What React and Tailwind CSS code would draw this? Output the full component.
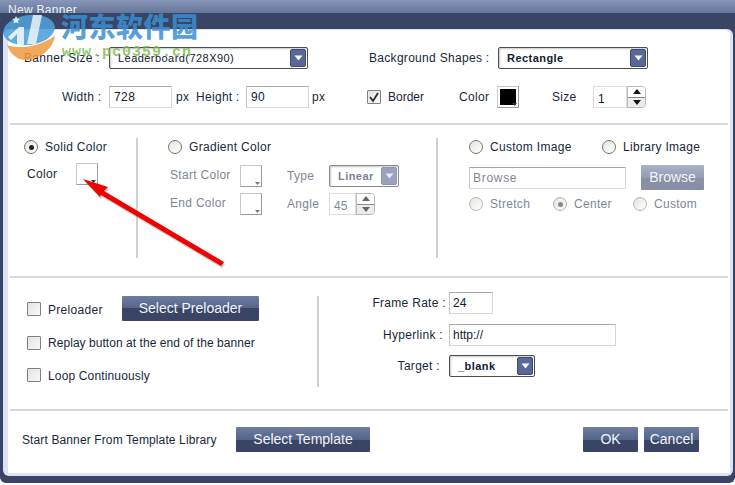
const FONT = { fontFamily: '"Liberation Sans", Arial, sans-serif' };

function Arrow({ muted }) {
  return (
    <svg width="9" height="6" viewBox="0 0 9 6">
      <path d="M0.5 0.5h8L4.5 5.5z" fill={muted ? '#e8ebf2' : '#ffffff'} />
    </svg>
  );
}

function Select({ label, className, bold, muted }) {
  return (
    <div className={`flex h-[22px] items-center justify-between rounded-[2px] border pl-[8px] pr-[1px] shadow-[inset_1px_1px_2px_#c8c8c8] ${muted ? 'border-[#8a8a8a]' : 'border-[#4d4d4d]'} ${className}`}>
      <span className={`text-[11px] ${bold ? 'font-bold' : ''} ${muted ? 'text-[#7a8294]' : 'text-[#10202e]'} tracking-[0.45px]`}>{label}</span>
      <div className={`flex h-[18px] w-[16px] items-center justify-center rounded-[2px] border ${muted ? 'border-[#8f97b4] bg-[#9aa2bf]' : 'border-[#3f4a70] bg-[#5a6897]'}`}>
        <Arrow muted={muted} />
      </div>
    </div>
  );
}

function Field({ value, className, muted }) {
  return (
    <div className={`flex h-[22px] items-center border border-[#d8d8d8] border-t-[#a8a8a8] border-l-[#c4c4c4] pl-[3px] text-[12px] ${muted ? 'text-[#7f8794] tracking-[0.7px]' : 'text-[#10202e]'} ${className}`}>
      {value}
    </div>
  );
}

function Radio({ checked, muted }) {
  return (
    <span className={`flex h-[14px] w-[14px] shrink-0 items-center justify-center rounded-full border bg-gradient-to-br from-[#e4e4e0] to-white ${muted ? 'border-[#b0b8a8]' : 'border-[#6f7c62]'}`}>
      {checked && <span className={`h-[5px] w-[5px] rounded-full ${muted ? 'bg-[#8a8a8a]' : 'bg-[#222222]'}`} />}
    </span>
  );
}

function Check({ checked }) {
  return (
    <span className="flex h-[14px] w-[14px] shrink-0 items-center justify-center rounded-[1px] border border-[#808080] bg-gradient-to-br from-[#e2e2e2] to-[#fafafa]">
      {checked && (
        <svg width="12" height="12" viewBox="0 0 12 12">
          <path d="M2 6l3 4 5-8" fill="none" stroke="#2b2b2b" strokeWidth="1.8" />
        </svg>
      )}
    </span>
  );
}

function Swatch({ fill, muted, className }) {
  return (
    <div className={`relative h-[22px] w-[22px] border border-t-[#c8c8c8] border-l-[#c8c8c8] border-r-[#9a9a9a] border-b-[#9a9a9a] bg-white p-[2px] ${className}`}>
      <div className={`h-full w-full ${fill ? 'bg-black' : ''}`} />
      <svg className="absolute bottom-[1px] right-[1px]" width="5" height="3" viewBox="0 0 5 3">
        <path d="M0 0h5L2.5 3z" fill={muted ? '#777777' : '#333333'} />
      </svg>
    </div>
  );
}

function Spinner({ value, muted, className, h }) {
  return (
    <div className={`flex ${h} ${className}`}>
      <div className={`flex w-[34px] items-center border border-[#dcdcdc] pl-[4px] text-[12px] ${muted ? 'text-[#7f8794]' : 'text-[#10202e]'}`}>
        <span className="mt-[3px]">{value}</span>
      </div>
      <div className="flex w-[19px] flex-col overflow-hidden rounded-r-[4px] border border-[#b8b8b8]">
        <div className="flex flex-1 items-center justify-center border-b border-[#8a8a8a] bg-white">
          <svg width="8" height="5" viewBox="0 0 8 5"><path d="M4 0l4 5H0z" fill={muted ? '#666666' : '#111111'} /></svg>
        </div>
        <div className="flex flex-1 items-center justify-center bg-[#ececec]">
          <svg width="8" height="5" viewBox="0 0 8 5"><path d="M0 0h8L4 5z" fill={muted ? '#666666' : '#111111'} /></svg>
        </div>
      </div>
    </div>
  );
}

function Btn({ label, className, muted }) {
  return (
    <div className={`flex h-[25px] items-center justify-center overflow-hidden rounded-[1px] text-[14px] ${muted ? 'bg-[linear-gradient(#aab2c8,#959cb5_50%,#898fa7_50%)] text-[#f4f5f8]' : 'bg-[linear-gradient(#6d7ca0,#55648a_50%,#3a4566_50%)] text-[#f2f4f8]'} ${className}`}>
      {label}
    </div>
  );
}

function Label({ children, className }) {
  return <span className={`text-[12px] tracking-[0.3px] text-[#18283a] ${className}`}>{children}</span>;
}

function Muted({ children, className }) {
  return <span className={`text-[12px] tracking-[0.3px] text-[#7f8794] ${className}`}>{children}</span>;
}

function Line() {
  return <div className="mx-[2px] h-[2px] bg-[#d8d8d8]" />;
}

export default function App() {
  return (
    <div className="relative h-[485px] w-[735px] overflow-hidden bg-white" style={FONT}>
      <div className="flex h-[483px] flex-col rounded-b-[6px] bg-[#3a4566] pb-[7px]">
        <div className="h-[13px] bg-[linear-gradient(#8896b8,#66759b)] pl-[8px] text-[12px] leading-[20px] tracking-[0.3px] text-[#eef1f7]">New Banner</div>
        <div className="h-[16px] bg-[#3a4566]" />
        <div className="ml-[3px] mr-[2px] flex flex-1 flex-col rounded-[6px] bg-[#dfe2f2] pl-[5px] pr-[3px] pt-[1px] pb-[3px]">
          <div className="flex flex-1 flex-col rounded-t-[5px] bg-white">
            {/* top rows */}
            <div className="flex h-[93px] flex-col">
              <div className="mt-[17px] flex h-[22px] items-center">
                <Label className="ml-[16px] w-[85px]">Banner Size  :</Label>
                <Select label="Leaderboard(728X90)" className="w-[199px]" />
                <Label className="ml-[61px] w-[129px]">Background Shapes  :</Label>
                <Select label="Rectangle" bold className="w-[150px]" />
              </div>
              <div className="mt-[17px] flex h-[22px] items-center">
                <Label className="ml-[54px] w-[47px]">Width :</Label>
                <Field value="728" className="w-[63px] pl-[4px] tracking-[0.4px]" />
                <Label className="ml-[4px] w-[20px]">px</Label>
                <Label className="w-[50px]">Height :</Label>
                <Field value="90" className="w-[63px] pl-[4px] tracking-[0.4px]" />
                <Label className="ml-[3px] w-[55px]">px</Label>
                <Check checked />
                <Label className="ml-[7px] w-[71px] tracking-[0px]">Border</Label>
                <Label className="w-[38px]">Color</Label>
                <Swatch fill />
                <Label className="ml-[33px] w-[41px]">Size</Label>
                <Spinner value="1" h="h-[22px]" />
              </div>
            </div>
            <Line />
            {/* fill section */}
            <div className="flex h-[151px] pt-[13px]">
              <div className="flex h-[120px] w-[130px] flex-col border-r-2 border-[#d0d0d0] pl-[16px]">
                <div className="flex items-center gap-[7px]">
                  <Radio checked />
                  <Label>Solid Color</Label>
                </div>
                <div className="mt-[7px] flex items-center">
                  <Label className="ml-[3px] w-[49px]">Color</Label>
                  <Swatch />
                </div>
              </div>
              <div className="flex h-[120px] w-[300px] flex-col border-r-2 border-[#d0d0d0] pl-[30px]">
                <div className="flex items-center gap-[7px]">
                  <Radio />
                  <Label>Gradient Color</Label>
                </div>
                <div className="mt-[9px] flex items-center">
                  <Muted className="mb-[2px] ml-[2px] w-[70px]">Start Color</Muted>
                  <Swatch muted />
                  <Muted className="ml-[25px] w-[42px]">Type</Muted>
                  <Select label="Linear" bold muted className="w-[70px]" />
                </div>
                <div className="mt-[6px] flex items-center">
                  <Muted className="mb-[2px] ml-[2px] w-[70px]">End Color</Muted>
                  <Swatch muted />
                  <Muted className="ml-[25px] w-[42px]">Angle</Muted>
                  <Spinner value="45" muted h="h-[22px]" className="w-[46px] [&>div:first-child]:w-[28px]" />
                </div>
              </div>
              <div className="flex flex-col pl-[31px]">
                <div className="flex items-center">
                  <Radio />
                  <Label className="ml-[7px] w-[112px]">Custom Image</Label>
                  <Radio />
                  <Label className="ml-[7px]">Library Image</Label>
                </div>
                <div className="mt-[9px] flex items-center">
                  <Field value="Browse" muted className="w-[157px]" />
                  <Btn label="Browse" muted className="ml-[15px] w-[63px]" />
                </div>
                <div className="mt-[5px] flex items-center">
                  <Radio muted />
                  <Muted className="ml-[7px] w-[63px]">Stretch</Muted>
                  <Radio checked muted />
                  <Muted className="ml-[7px] w-[59px]">Center</Muted>
                  <Radio muted />
                  <Muted className="ml-[7px]">Custom</Muted>
                </div>
              </div>
            </div>
            <Line />
            {/* options */}
            <div className="flex h-[131px] pt-[18px]">
              <div className="flex h-[91px] w-[311px] flex-col border-r-2 border-[#d0d0d0] pl-[19px]">
                <div className="flex h-[25px] items-center">
                  <Check />
                  <Label className="mt-[2px] ml-[7px] w-[74px]">Preloader</Label>
                  <Btn label="Select Preloader" className="w-[137px]" />
                </div>
                <div className="mt-[10px] flex h-[24px] items-center">
                  <Check />
                  <Label className="ml-[7px] tracking-[0.05px]">Replay button at the end of the banner</Label>
                </div>
                <div className="mt-[9px] flex h-[24px] items-center">
                  <Check />
                  <Label className="mt-[2px] ml-[7px] tracking-[0.15px]">Loop Continuously</Label>
                </div>
              </div>
              <div className="flex flex-col">
                <div className="mt-[-4px] flex h-[22px] items-center">
                  <Label className="w-[127px] text-right">Frame Rate :</Label>
                  <Field value="24" className="ml-[3px] w-[44px]" />
                </div>
                <div className="mt-[10px] flex h-[22px] items-center">
                  <Label className="w-[124px] text-right">Hyperlink :</Label>
                  <Field value="http://" className="ml-[6px] w-[167px]" />
                </div>
                <div className="mt-[9px] flex h-[22px] items-center">
                  <Label className="w-[121px] text-right">Target :</Label>
                  <Select label="_blank" bold className="ml-[9px] w-[86px]" />
                </div>
              </div>
            </div>
            <Line />
            {/* footer */}
            <div className="mt-[16px] flex h-[25px] items-center">
              <Label className="ml-[14px] w-[214px] text-[11.5px] tracking-[0.12px]">Start Banner From Template Library</Label>
              <Btn label="Select Template" className="w-[134px]" />
              <Btn label="OK" className="ml-[213px] w-[55px]" />
              <Btn label="Cancel" className="ml-[6px] w-[55px]" />
            </div>
          </div>
        </div>
      </div>

      {/* pc0359 watermark over the dialog */}
      <svg className="absolute left-0 top-[12px]" width="60" height="50" viewBox="0 0 60 50">
        <ellipse cx="29" cy="18" rx="26" ry="15" transform="rotate(-8 29 18)" fill="#4f9fd8" opacity="0.88" />
        <path d="M33 3h9L36 32h-9z" fill="#ffffff" opacity="0.75" />
        <path d="M8 25l11-10h5v18h-7V22l-6 6z" fill="#ffffff" opacity="0.8" />
        <path d="M16 4l1.2 2.6 2.8.3-2.1 1.9.6 2.8-2.5-1.4-2.5 1.4.6-2.8-2.1-1.9 2.8-.3z" fill="#ffffff" opacity="0.8" />
        <path d="M7 33c10 4 30 3 48-9-2 12-13 22-27 24-10 1-18-6-21-15z" fill="#f09a3e" opacity="0.85" />
      </svg>
      <div className="absolute left-[61px] top-[9px] text-[27px] leading-[34px] font-black tracking-[0.5px] text-[#3a8fd0]/85" style={{ fontFamily: '"Noto Sans CJK SC", sans-serif' }}>河东软件园</div>
      <div className="absolute left-[62px] top-[44px] text-[15px] leading-[18px] font-bold tracking-[1px] text-[#79b84a]/80" style={{ fontFamily: '"Liberation Mono", monospace' }}>www.pc0359.cn</div>

      {/* red annotation arrow */}
      <svg className="absolute left-0 top-0" width="735" height="485" viewBox="0 0 735 485" style={{ pointerEvents: 'none' }}>
        <path d="M83 179L108 187L104 191L224 262L221 266L101 195L100 197z" fill="#666666" opacity="0.35" transform="translate(1 2)" />
        <path d="M83 179L108 187L104 191L224 262L221 266L101 195L100 197z" fill="#f00000" />
      </svg>
    </div>
  );
}
